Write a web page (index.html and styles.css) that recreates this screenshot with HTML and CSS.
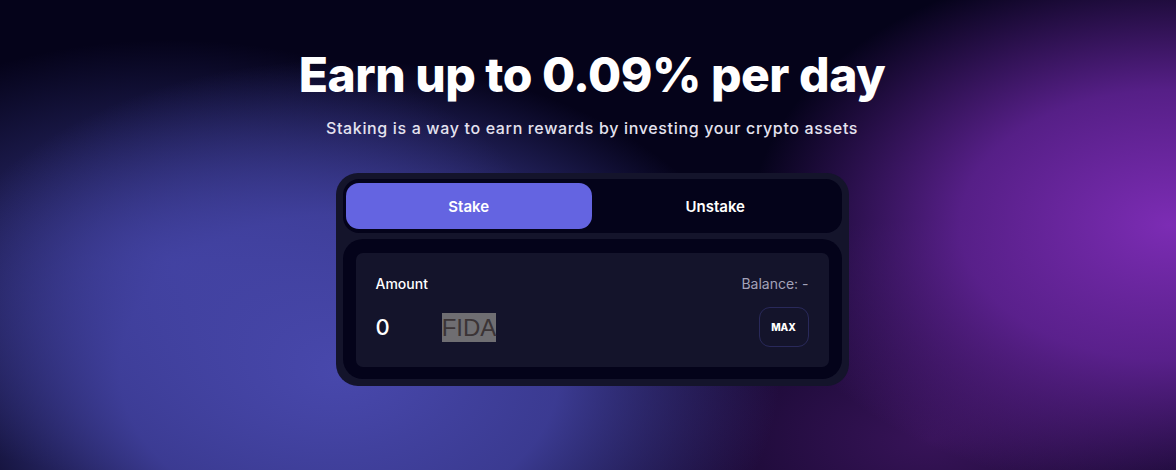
FILE: index.html
```html
<!DOCTYPE html>
<html lang="en">
<head>
  <meta charset="UTF-8" />
  <meta name="viewport" content="width=device-width, initial-scale=1.0"/>
  <title>Staking</title>
  <link rel="stylesheet" href="styles.css">
</head>
<body>

  <main class="hero">
    <h1>Earn up to 0.09% per day</h1>
    <p class="sub">Staking is a way to earn rewards by investing your crypto assets</p>

    <div class="card">
      <div class="tabs">
        <button class="tab active">Stake</button>
        <button class="tab">Unstake</button>
      </div>

      <div class="panel">
        <div class="amount-box">
          <div class="row">
            <span class="label">Amount</span>
            <span class="balance">Balance: -</span>
          </div>
          <div class="row">
            <div class="value">
              <span class="num">0</span>
              <span class="token">FIDA</span>
            </div>
            <button class="max">MAX</button>
          </div>
        </div>
      </div>
    </div>
  </main>
</body>
</html>
```

FILE: styles.css
```css
* {
  box-sizing: border-box;
}

html, body {
  height: 100%;
}

body {
  margin: 0;
  overflow: hidden;
  font-family: Inter, "Noto Sans", sans-serif;
  color: #fff;
  /* glows: blue on the left, purple on the right */
  background:
    radial-gradient(ellipse 440px 310px at 340px 370px, rgba(72, 72, 172, 1) 0%, rgba(68, 68, 166, 0.85) 50%, rgba(60, 60, 150, 0) 100%),
    radial-gradient(ellipse 380px 220px at 170px 260px, rgba(62, 62, 152, 0.9) 0%, rgba(62, 62, 152, 0) 100%),
    radial-gradient(ellipse 420px 270px at 1170px 225px, rgba(124, 44, 180, 1) 0%, rgba(106, 38, 162, 0.8) 50%, rgba(90, 30, 140, 0) 100%),
    radial-gradient(ellipse 400px 220px at 930px 440px, rgba(58, 20, 92, 0.95) 0%, rgba(58, 20, 92, 0) 100%),
    #05031a;
}

.hero {
  display: flex;
  flex-direction: column;
  align-items: center;
  padding: 46px 0 0 8px;
}

h1 {
  margin: 0;
  font-size: 48px;
  font-weight: 800;
  letter-spacing: -0.5px;
  line-height: 58px;
}

.sub {
  margin: 14px 0 0;
  font-size: 16px;
  font-weight: 500;
  color: #e4e2ef;
  letter-spacing: 0.65px;
}

.card {
  margin-top: 35px;
  width: 513px;
  padding: 6px 7px 7px;
  background: #14142b;
  border-radius: 22px;
  display: flex;
  flex-direction: column;
  gap: 6px;
}

.tabs {
  display: flex;
  padding: 4px 3px;
  background: #04031a;
  border-radius: 16px;
}

.tab {
  flex: 1;
  height: 46px;
  border: none;
  border-radius: 13px;
  background: transparent;
  color: #fff;
  font-family: inherit;
  font-size: 15px;
  font-weight: 600;
  cursor: pointer;
}

.tab.active {
  background: #6464e1;
}

.panel {
  background: #04031a;
  border-radius: 20px;
  padding: 14px 13px 12px;
}

.amount-box {
  background: #14142b;
  border-radius: 7px;
  padding: 22px 20px 20px;
  display: flex;
  flex-direction: column;
  gap: 15px;
}

.row {
  display: flex;
  justify-content: space-between;
  align-items: center;
}

.label {
  font-size: 14px;
  font-weight: 500;
}

.balance {
  font-size: 14px;
  color: #a3a2b8;
}

.value {
  display: flex;
  align-items: center;
  gap: 52px;
}

.num {
  font-size: 22px;
  font-weight: 500;
}

.token {
  font-family: "Liberation Sans", Arial, sans-serif;
  font-size: 24px;
  line-height: 29px;
  color: #3b3436;
  background: #6f6e72;
}

.max {
  width: 50px;
  height: 40px;
  border: 1px solid #29295a;
  border-radius: 11px;
  background: transparent;
  color: #fff;
  font-family: inherit;
  font-size: 10px;
  font-weight: 800;
}
```
